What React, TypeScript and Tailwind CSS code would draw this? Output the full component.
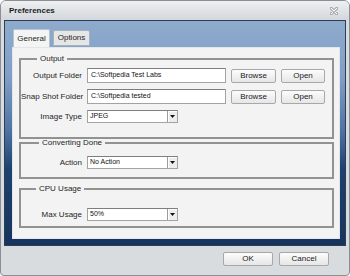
function TextInput({ value }: { value: string }) {
  return (
    <div className="w-[139px] h-[15px] flex items-center pl-[3px] bg-white border border-[#a3a3a3] border-t-[#7e7e7e] text-[7px] text-[#111]">
      {value}
    </div>
  )
}

function Button({ label, width }: { label: string; width: string }) {
  return (
    <div
      className={`${width} h-[14px] flex items-center justify-center rounded-[2px] border border-[#a8a8a8] bg-[linear-gradient(#fcfcfc,#e6e6e6)] text-[8px] text-[#1a1a1a]`}
    >
      {label}
    </div>
  )
}

function Select({ value }: { value: string }) {
  return (
    <div className="w-[91px] h-[13px] flex bg-white border border-[#a3a3a3] border-t-[#7e7e7e]">
      <span className="flex-1 flex items-center pl-[2px] text-[7px] text-[#111]">{value}</span>
      <span className="w-[10px] h-full flex items-center justify-center bg-[#ededed] border-l border-[#9c9c9c] shadow-[inset_1px_1px_0_#fff]">
        <svg width="5" height="3" viewBox="0 0 5 3">
          <path d="M0 0h5L2.5 3z" fill="#111" />
        </svg>
      </span>
    </div>
  )
}

function Row({ label, children }: { label: string; children: React.ReactNode }) {
  return (
    <div className="flex items-center">
      <span className="w-[61px] text-right whitespace-nowrap text-[8px] text-[#1e1e1e]">{label}</span>
      <div className="ml-[5px] flex items-center gap-[5px]">{children}</div>
    </div>
  )
}

export default function App() {
  return (
    <div className="w-[350px] h-[276px] flex flex-col overflow-hidden rounded-t-[6px] rounded-b-[4px] border border-[#8b8f95] bg-[#d9dcdf] font-['Liberation_Sans',Arial,sans-serif]">
      <div className="h-[19px] flex items-center justify-between pl-[8px] pr-[11px] bg-[linear-gradient(#eef0f2,#d3d7db)]">
        <span className="text-[8px] font-bold text-[#1c1c1c]">Preferences</span>
        <svg width="8" height="8" viewBox="0 0 8 8">
          <path d="M1 1l6 6M7 1L1 7" stroke="#7d838a" strokeWidth="2.6" strokeLinecap="round" />
          <path d="M1 1l6 6M7 1L1 7" stroke="#fdfdfd" strokeWidth="1.2" strokeLinecap="round" />
        </svg>
      </div>

      <div className="mx-[3px] h-[226px] flex flex-col border border-[#2c3d55] bg-[linear-gradient(180deg,#8eabcd_0%,#819fc6_25%,#4c71a1_50%,#1e426f_66%,#16345d_100%)]">
        <div className="h-[26px] flex items-end pl-[8px] gap-[3px] pt-[8px]">
          <div className="w-[37px] h-[18px] flex items-center justify-center bg-[#f4f4f4] border border-b-0 border-[#b9c3cf] rounded-t-[2px] text-[8px] text-[#1e1e1e]">
            General
          </div>
          <div className="w-[37px] h-[16px] mb-[1px] flex items-center justify-center bg-[#e6e6e6] border border-[#a7b2bf] rounded-t-[2px] text-[8px] text-[#1e1e1e]">
            Options
          </div>
        </div>

        <div className="ml-[7px] w-[328px] h-[192px] flex flex-col bg-[#f3f3f3] border border-[#e2e6ea] pl-[6px] pr-[5px] pt-[7px]">
          <fieldset className="h-[84px] border-2 border-[#929292] flex flex-col gap-[6px] pt-[5px]">
            <legend className="ml-[16px] px-[3px] text-[8px] leading-[8px] text-[#1e1e1e]">Output</legend>
            <Row label="Output Folder">
              <TextInput value="C:\Softpedia Test Labs" />
              <Button label="Browse" width="w-[45px]" />
              <Button label="Open" width="w-[44px]" />
            </Row>
            <Row label="Snap Shot Folder">
              <TextInput value="C:\Softpedia tested" />
              <Button label="Browse" width="w-[45px]" />
              <Button label="Open" width="w-[44px]" />
            </Row>
            <Row label="Image Type">
              <Select value="JPEG" />
            </Row>
          </fieldset>

          <fieldset className="h-[40px] border-2 border-[#929292] pt-[9px]">
            <legend className="ml-[18px] px-[3px] text-[8px] leading-[8px] text-[#1e1e1e]">Converting Done</legend>
            <Row label="Action">
              <Select value="No Action" />
            </Row>
          </fieldset>

          <fieldset className="mt-[6px] h-[43px] border-2 border-[#929292] pt-[15px]">
            <legend className="ml-[15px] px-[3px] text-[8px] leading-[8px] text-[#1e1e1e]">CPU Usage</legend>
            <Row label="Max Usage">
              <Select value="50%" />
            </Row>
          </fieldset>
        </div>
      </div>

      <div className="flex-1 flex items-start justify-end gap-[6px] pt-[6px] pr-[20px]">
        <Button label="OK" width="w-[50px]" />
        <Button label="Cancel" width="w-[50px]" />
      </div>
    </div>
  )
}
